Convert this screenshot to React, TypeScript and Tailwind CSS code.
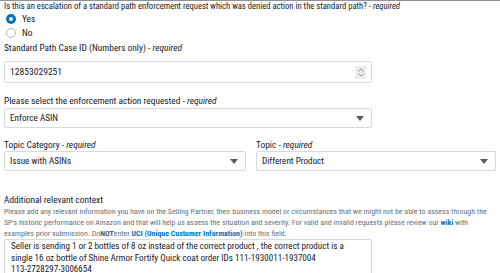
import React from "react";

function Label({ text }: { text: string }) {
  return (
    <div className="h-[13px] text-[9.4px] leading-[13px] text-[#16191f] whitespace-nowrap">
      {text} - <i>required</i>
    </div>
  );
}

function Caret() {
  return (
    <svg width="8" height="5" viewBox="0 0 8 5" className="shrink-0">
      <path d="M0 0 H8 L4 5 Z" fill="#545b64" />
    </svg>
  );
}

function Select({ value, className }: { value: string; className: string }) {
  return (
    <div
      className={`h-[20px] border border-[#d5dbdb] rounded-[2px] flex items-center justify-between pl-[5px] pr-[7px] text-[9.2px] text-[#16191f] ${className}`}
    >
      <span>{value}</span>
      <Caret />
    </div>
  );
}

export default function App() {
  return (
    <div className="w-[500px] h-[273px] overflow-hidden bg-white border-t border-[#8d9196] font-['Roboto_Condensed','Roboto',sans-serif] text-[#16191f]">
      <div className="px-[4px]">
        <div className="h-[11px] text-[8.6px] leading-[11px] whitespace-nowrap">
          Is this an escalation of a standard path enforcement request which was denied action in the standard path? -{" "}
          <i>required</i>
        </div>
        <div className="flex flex-col">
          <div className="flex items-center h-[14px] pl-[2px] gap-[6px]">
            <span className="w-[10px] h-[10px] rounded-full bg-[#0073bb] flex items-center justify-center">
              <span className="w-[4px] h-[4px] rounded-full bg-white" />
            </span>
            <span className="text-[9.4px]">Yes</span>
          </div>
          <div className="flex items-center h-[14px] pl-[2px] gap-[6px]">
            <span className="w-[10px] h-[10px] rounded-full border border-[#aab7b8] bg-white" />
            <span className="text-[9.4px]">No</span>
          </div>
        </div>

        <div className="mt-[1px]">
          <Label text="Standard Path Case ID (Numbers only)" />
        </div>
        <div className="mt-[7px] w-[368px] h-[22px] border border-[#d5dbdb] rounded-[2px] flex items-center justify-between pl-[5px] pr-[5px]">
          <span className="text-[9.6px]">12853029251</span>
          <span className="w-[11px] h-[13px] bg-[#eaeded] flex flex-col items-center justify-center gap-[1px]">
            <svg width="6" height="4" viewBox="0 0 6 4">
              <path d="M0.5 3.5 L3 1 L5.5 3.5" fill="none" stroke="#879596" strokeWidth="1" />
            </svg>
            <svg width="6" height="4" viewBox="0 0 6 4">
              <path d="M0.5 0.5 L3 3 L5.5 0.5" fill="none" stroke="#879596" strokeWidth="1" />
            </svg>
          </span>
        </div>

        <div className="mt-[11px]">
          <Label text="Please select the enforcement action requested" />
        </div>
        <Select value="Enforce ASIN" className="mt-[1px] w-[368px]" />

        <div className="mt-[10px] flex gap-[10px]">
          <div className="w-[242px]">
            <Label text="Topic Category" />
            <Select value="Issue with ASINs" className="w-[242px]" />
          </div>
          <div className="w-[240px]">
            <Label text="Topic" />
            <Select value="Different Product" className="w-[240px]" />
          </div>
        </div>

        <div className="mt-[22px] h-[13px] text-[9.4px] leading-[13px] whitespace-nowrap">
          Additional relevant context
        </div>
        <div className="text-[7.9px] leading-[11px] text-[#687078] whitespace-nowrap">
          Please add any relevant information you have on the Selling Partner, their business model or circumstances that we might not be able to assess through the
          <br />
          SP&apos;s historic performance on Amazon and that will help us assess the situation and severity. For valid and invalid requests please review our{" "}
          <b className="text-[#0073bb]">wiki</b> with
          <br />
          examples prior submission. Do<b className="text-[#545b64]">NOT</b>enter{" "}
          <b className="text-[#0073bb]">UCI (Unique Customer Information)</b> into this field.
        </div>
        <div className="w-[368px] h-[60px] border border-[#d5dbdb] rounded-[2px] px-[6px] pt-[1px] text-[9.1px] leading-[11.5px] text-[#16191f] whitespace-nowrap">
          Seller is sending 1 or 2 bottles of 8 oz instead of the correct product , the correct product is a
          <br />
          single 16 oz bottle of Shine Armor Fortify Quick coat order IDs 111-1930011-1937004
          <br />
          113-2728297-3006654
        </div>
      </div>
    </div>
  );
}
